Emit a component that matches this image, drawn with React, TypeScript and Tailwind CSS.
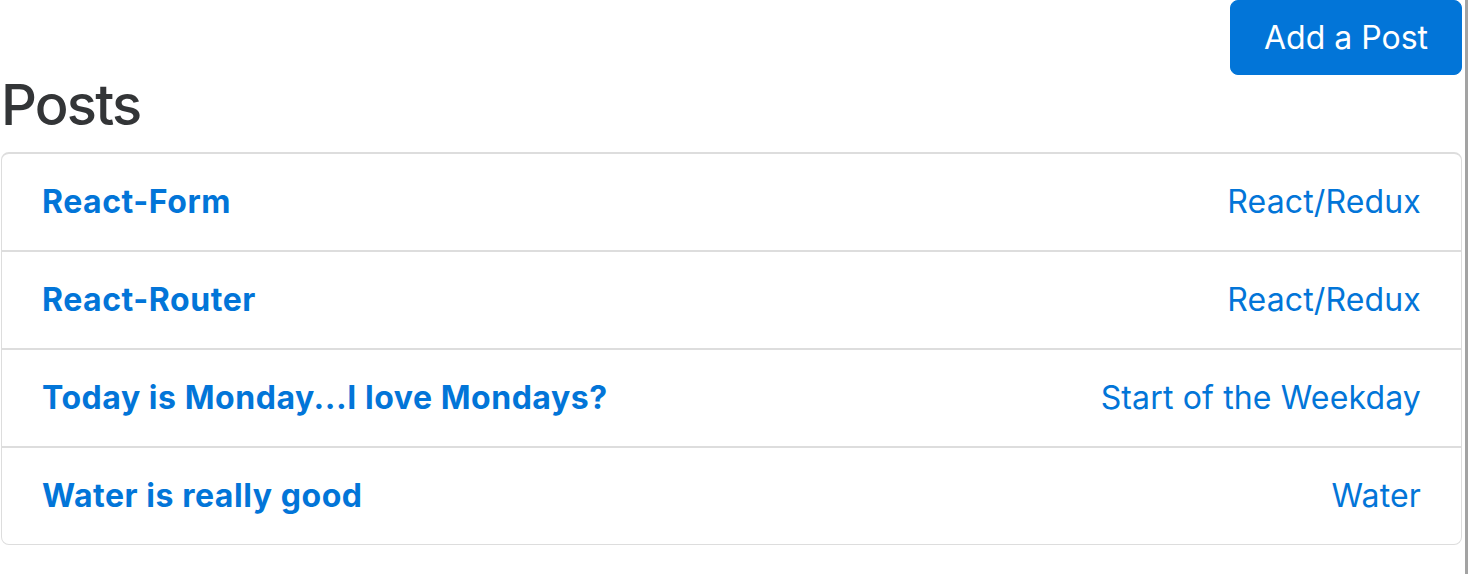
import React from "react";

interface Post {
    title: string;
    category: string;
}

const posts: Post[] = [
    { title: "React-Form", category: "React/Redux" },
    { title: "React-Router", category: "React/Redux" },
    { title: "Today is Monday...I love Mondays?", category: "Start of the Weekday" },
    { title: "Water is really good", category: "Water" },
];

export default function App() {
    return (
        <div className="flex h-[574px] w-[1470px] overflow-hidden bg-white font-['Inter',sans-serif]">
            <div className="w-[1465px] pl-px pr-[3px]">
                <div className="flex justify-end">
                    <button className="h-[75px] rounded-[8px] border border-[#0275d8] bg-[#0275d8] px-[33px] text-[32px] leading-[40px] text-white">
                        Add a Post
                    </button>
                </div>
                <h3 className="mb-[16px] text-[56px] font-medium leading-[61px] tracking-[-1.8px] text-[#333537]">
                    Posts
                </h3>
                <ul className="rounded-[8px] border border-t-2 border-[#dddddd]">
                    {posts.map((post, i) => (
                        <li
                            key={post.title}
                            className={`flex items-center justify-between px-[40px] py-[24px] text-[32px] leading-[48px] text-[#0275d8] ${
                                i > 0 ? "border-t-2 border-[#dddddd]" : ""
                            }`}
                        >
                            <span className="font-bold tracking-[0.55px]">{post.title}</span>
                            <span className="tracking-[0.15px]">{post.category}</span>
                        </li>
                    ))}
                </ul>
            </div>
            <div className="h-full w-[3px] bg-[#a3a3a3]" />
        </div>
    );
}
